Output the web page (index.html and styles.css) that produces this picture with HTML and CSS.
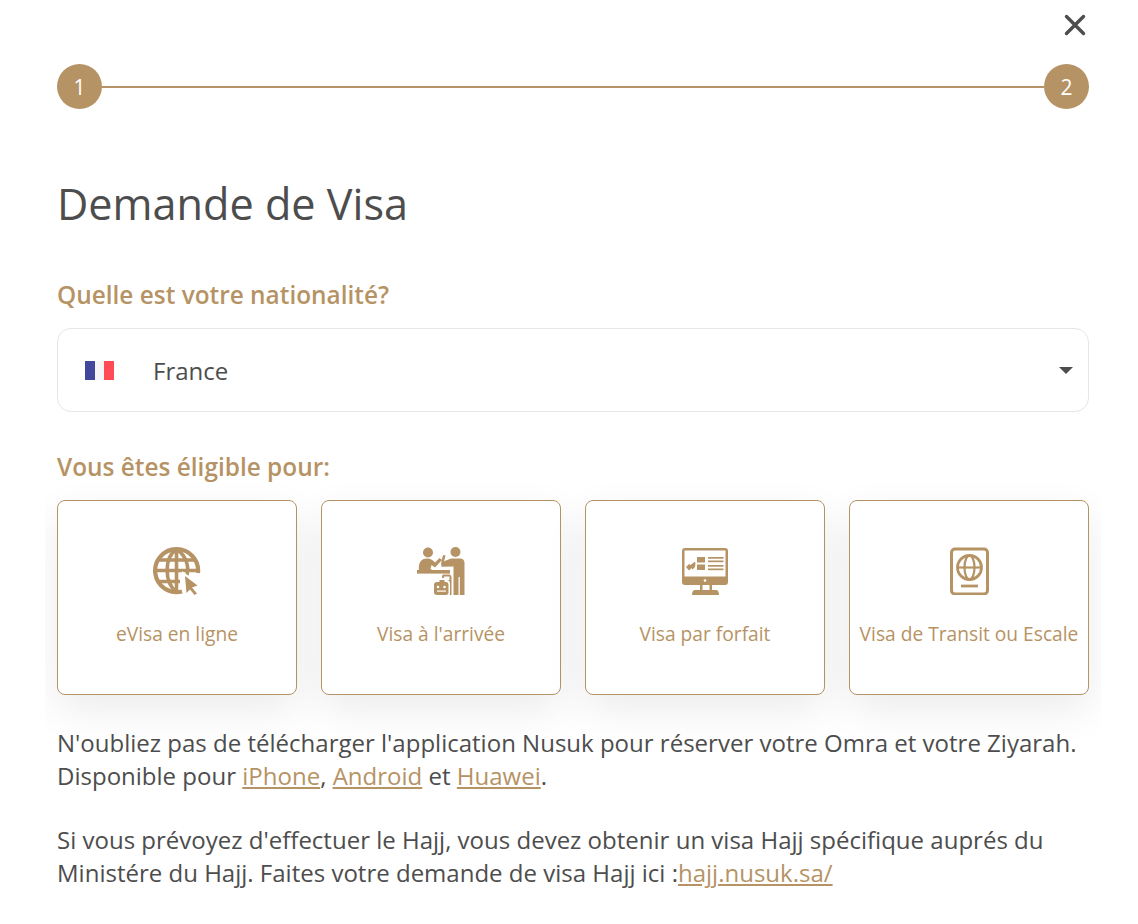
FILE: index.html
```html
<!DOCTYPE html>
<html lang="fr">

<head>
    <title>Demande de Visa</title>
    <meta charset="UTF-8" />
    <meta name="viewport" content="width=device-width,initial-scale=1" />
    <link rel="stylesheet" href="styles.css">
</head>

<body>
    <main class="modal">
        <div class="close-row">
            <button class="close" aria-label="Fermer">
                <svg width="22" height="22" viewBox="0 0 22 22">
                    <path d="M2.500 2.500 L19.500 19.500 M19.500 2.500 L2.500 19.500" stroke="#4d4d4d" stroke-width="3.400" stroke-linecap="round" fill="none" />
                </svg>
            </button>
        </div>

        <div class="stepper">
            <span class="step">1</span>
            <span class="step-line"></span>
            <span class="step">2</span>
        </div>

        <h1>Demande de Visa</h1>

        <label class="label">Quelle est votre nationalité?</label>
        <div class="select">
            <svg class="flag" width="29" height="19" viewBox="0 0 29 19">
                <rect width="10" height="19" fill="#41479b" />
                <rect x="10" width="9" height="19" fill="#f5f5f5" />
                <rect x="19" width="10" height="19" fill="#ff4b55" />
            </svg>
            <span class="select-value">France</span>
            <span class="caret"></span>
        </div>

        <p class="label eligible">Vous êtes éligible pour:</p>
        <div class="cards-wrap">
            <div class="cards">
                <div class="card">
                    <svg width="48" height="48" viewBox="0 0 48 48">
                        <g fill="none" stroke="#b69364" stroke-width="3.600">
                            <path d="M29 44.500 A21.500 21.500 0 1 1 45 26" stroke-width="4.200" />
                            <path d="M23.500 2 C11 11 11 35 23.500 45 M23.500 2 C36 11 36 24 33 30 M23.500 2 V45" />
                            <path d="M5.500 13 H41.500 M2 23.500 H45 M5.500 34.500 H27" />
                        </g>
                        <path d="M29 24 L48 38 L42 41 L47 47 L41 50 L37 45 L32 49 Z" fill="#fff" />
                        <path d="M32 29 L44.500 38.500 L39 40.500 L44 46.500 L41.500 48 L37 42.500 L33.500 46 Z" fill="#b69364" />
                    </svg>
                    <span>eVisa en ligne</span>
                </div>
                <div class="card">
                    <svg width="48" height="48" viewBox="0 0 48 48">
                        <g fill="#b69364">
                            <circle cx="11" cy="5.500" r="5" />
                            <circle cx="38.500" cy="5" r="5" />
                            <path d="M2 24 C1 16 4 11.500 10 11.500 C14 11.500 16 13.500 18 15.500 L22.500 11 L25 13 L18 20.500 L14.500 18 L13.500 22 L17 24 Z" />
                            <rect x="0" y="23" width="33" height="3.600" />
                            <path d="M24 15.500 L34 11.500 H43 C46 11.500 47.500 13.500 47.500 16 V48 H42.800 V30 H41.500 V48 H36.500 V19.500 L24.500 19.800 Z" />
                            <rect x="25" y="8" width="2.600" height="7" transform="rotate(15 26 12)" />
                            <path fill-rule="evenodd" d="M25 33 V29.500 C25 28 26 27.500 27 27.500 H32 C33.500 27.500 34.500 28.500 34.500 30 V48 H25 Z M27 33 H32.500 V29.500 H27 Z" />
                        </g>
                        <path d="M15 37 C15 35 17 33 19 33 H21 V31 H29 V33 H30 C32 33 33 35 33 37 V46 C33 48.500 32 49 30 49 H18 C16 49 15 48.500 15 46 Z" fill="#fff" />
                        <path d="M17 38 C17 36 18 35 20 35 H22.500 V33 H27.500 V35 H29 C30.500 35 31.500 36 31.500 38 V45.500 C31.500 47 30.500 48 29 48 H20 C18 48 17 47 17 45.500 Z" fill="#b69364" />
                        <g fill="#fff">
                            <circle cx="21" cy="40" r="1.300" />
                            <circle cx="27.500" cy="40" r="1.300" />
                            <rect x="20" y="43.500" width="9" height="1.200" />
                        </g>
                    </svg>
                    <span>Visa à l'arrivée</span>
                </div>
                <div class="card">
                    <svg width="48" height="48" viewBox="0 0 48 48">
                        <path fill-rule="evenodd" fill="#b69364" d="M4 1 H44 C46 1 47 2 47 4 V35 C47 37 46 38 44 38 H31 V43 H35 C37 43 38 45 38 48 H11 C11 45 12 43 14 43 H19 V38 H4 C2 38 1 37 1 35 V4 C1 2 2 1 4 1 Z M3.500 3.500 V29.500 H44.500 V3.500 Z M21.500 38 V43 H28.500 V38 Z" />
                        <g fill="#b69364">
                            <path d="M5 20 L8 17 L9.500 18 L13.500 15 L14.500 15.500 L14 20 L11.500 22.500 L10.500 21 L8 23.500 Z" />
                            <rect x="16" y="10" width="8" height="5.500" />
                            <rect x="16" y="17.500" width="8" height="5.500" />
                            <rect x="27" y="10" width="15.500" height="1.700" />
                            <rect x="27" y="13.500" width="15.500" height="1.700" />
                            <rect x="27" y="18" width="15.500" height="1.700" />
                            <rect x="27" y="21.500" width="15.500" height="1.700" />
                        </g>
                        <circle cx="24" cy="33.500" r="1.300" fill="#fff" />
                    </svg>
                    <span>Visa par forfait</span>
                </div>
                <div class="card">
                    <svg width="48" height="48" viewBox="0 0 48 48">
                        <g fill="none" stroke="#b69364">
                            <rect x="6.500" y="2" width="36" height="45" rx="3.500" stroke-width="3" />
                            <circle cx="24.500" cy="20.500" r="12" stroke-width="2.800" />
                            <ellipse cx="24.500" cy="20.500" rx="5" ry="12" stroke-width="2.200" />
                            <path d="M13 20.500 H36" stroke-width="2.200" />
                            <path d="M16 39 H33" stroke-width="2.800" />
                        </g>
                    </svg>
                    <span>Visa de Transit ou Escale</span>
                </div>
            </div>
        </div>

        <p class="note">N'oubliez pas de télécharger l'application Nusuk pour réserver votre Omra et votre Ziyarah. Disponible pour <a href="#">iPhone</a>, <a href="#">Android</a> et <a href="#">Huawei</a>.</p>
        <p class="note">Si vous prévoyez d'effectuer le Hajj, vous devez obtenir un visa Hajj spécifique auprés du Ministére du Hajj. Faites votre demande de visa Hajj ici :<a href="#">hajj.nusuk.sa/</a></p>
    </main>
</body>

</html>
```

FILE: styles.css
```css
/* Variables */
:root {
    --gold: #b69364;
    --text-color: #4d4d4d;
}

* {
    box-sizing: border-box;
}

body {
    margin: 0;
    background: #fff;
    color: var(--text-color);
    font-family: "Open Sans", sans-serif;
}

.modal {
    padding: 0 49px 0 57px;
    overflow: hidden;
}

.close-row {
    display: flex;
    justify-content: flex-end;
    height: 64px;
    padding: 14px 3px 0 0;
}

.close {
    width: 22px;
    height: 22px;
    padding: 0;
    border: 0;
    background: none;
}

/* Stepper */
.stepper {
    display: flex;
    align-items: center;
}

.step {
    display: flex;
    align-items: center;
    justify-content: center;
    width: 45px;
    height: 45px;
    border-radius: 50%;
    background: var(--gold);
    color: #fff;
    font-size: 21px;
}

.step-line {
    flex: 1;
    height: 2px;
    background: var(--gold);
}

h1 {
    margin: 66px 0 0;
    font-size: 43.2px;
    font-weight: 400;
    line-height: 57px;
}

.label {
    display: block;
    margin: 48px 0 0;
    color: var(--gold);
    font-size: 24.4px;
    font-weight: 600;
    line-height: 30px;
}

/* Nationality select */
.select {
    display: flex;
    align-items: center;
    height: 84px;
    margin-top: 18px;
    padding: 0 15px 0 27px;
    border: 1px solid #e6e6e6;
    border-radius: 14px;
}

.select-value {
    flex: 1;
    margin-left: 39px;
    font-size: 24px;
}

.caret {
    width: 0;
    height: 0;
    border-top: 7px solid var(--text-color);
    border-left: 7px solid transparent;
    border-right: 7px solid transparent;
}

.eligible {
    margin-top: 40px;
}

/* Visa cards */
.cards-wrap {
    margin: 0 -12px -15px;
    padding: 18px 12px 46px;
    overflow: hidden;
}

.cards {
    display: grid;
    grid-template-columns: repeat(4, 240px);
    gap: 24px;
}

.card {
    display: flex;
    flex-direction: column;
    align-items: center;
    height: 195px;
    padding-top: 46px;
    border: 1px solid var(--gold);
    border-radius: 8px;
    background: #fff;
    box-shadow: 0 15px 40px rgba(0, 0, 0, 0.08);
    color: var(--gold);
    font-size: 19.2px;
}

.card span {
    margin-top: 25px;
    white-space: nowrap;
}

.note {
    margin: 0 0 31px;
    font-size: 24.02px;
    line-height: 33px;
}

.note a {
    color: var(--gold);
}
```
